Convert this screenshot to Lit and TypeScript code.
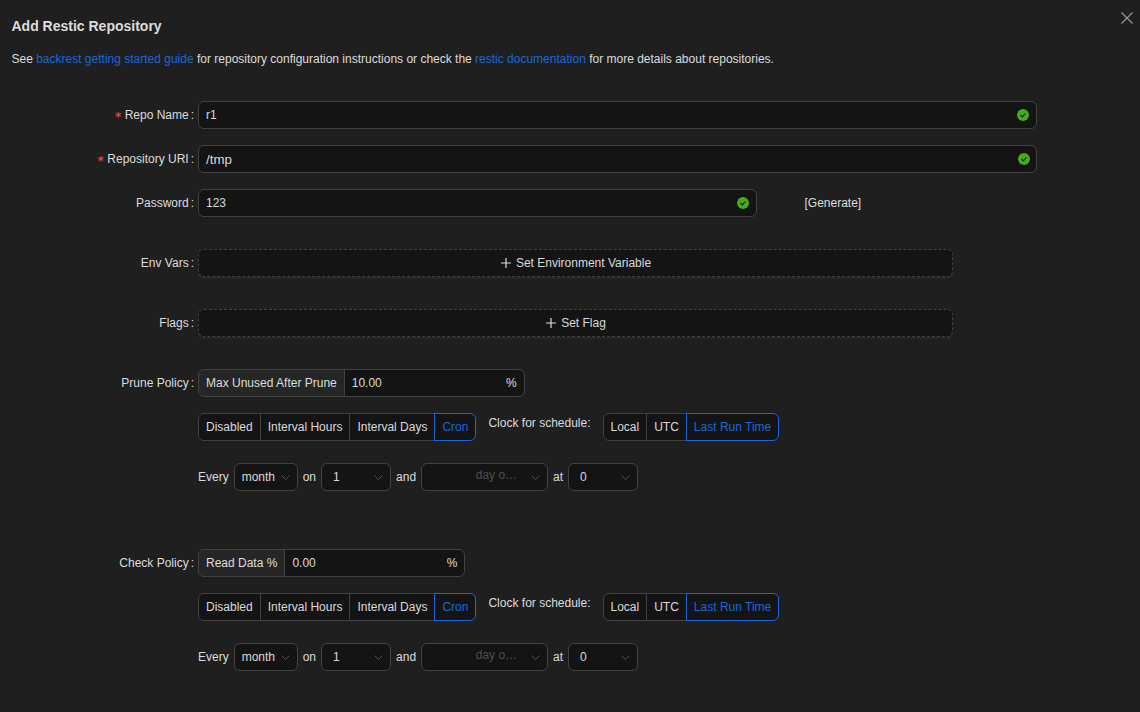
import { LitElement, html, css, svg } from "lit";
import { customElement } from "lit/decorators.js";

const check = html`<svg class="ok" viewBox="0 0 12 12"><circle cx="6" cy="6" r="6" fill="#49aa19"/><path d="M3.6 6.2 5.3 7.9 8.4 4.5" fill="none" stroke="#141414" stroke-width="1.1"/></svg>`;
const chev = svg`<path d="M.5.5 4.5 4.5 8.5.5" fill="none" stroke="currentColor" stroke-width="1"/>`;
const chevron = html`<svg class="chev" viewBox="0 0 9 5">${chev}</svg>`;
const plus = html`<svg class="plus" viewBox="0 0 10 10"><path d="M5 0V10M0 5H10" stroke="currentColor" stroke-width="1.2" fill="none"/></svg>`;

@customElement("app-root")
export class AppRoot extends LitElement {
  static styles = css`
    :host { display: block; width: 1140px; height: 712px; overflow: hidden; background: #1f1f1f; color: rgba(255,255,255,.85); font: 12px/20px "Liberation Sans", Arial, sans-serif; box-sizing: border-box; position: relative; }
    * { box-sizing: border-box; }
    .close { position: absolute; top: 12px; right: 7px; width: 12px; height: 12px; color: rgba(255,255,255,.55); display: block; }
    h1 { margin: 0; padding: 16px 0 0 11.5px; font-size: 14px; line-height: 20px; font-weight: 700; color: rgba(255,255,255,.85); }
    p { margin: 0; padding: 13px 0 0 11.5px; line-height: 20px; color: rgba(255,255,255,.85); }
    a { color: #1668dc; text-decoration: none; }
    form { display: block; padding-top: 32px; }
    .row { display: grid; grid-template-columns: 198px 1fr; height: 28px; margin-bottom: 16px; align-items: center; }
    .row.g2 { margin-bottom: 32px; }
    .row.g3 { margin-bottom: 22px; }
    .row.g4 { margin-bottom: 58px; }
    label { display: flex; justify-content: flex-end; align-items: center; padding-right: 0; color: rgba(255,255,255,.85); white-space: nowrap; }
    label .req { color: #dc4446; font-family: "DejaVu Sans", sans-serif; font-size: 12px; margin: 3px 4px 0 0; line-height: 1; font-weight: 700; letter-spacing: -.6px; }
    label .c { margin: 0 4px 0 2px; }
    .input { display: flex; align-items: center; height: 28px; border: 1px solid #424242; border-radius: 6px; background: #141414; padding: 0 7px; color: rgba(255,255,255,.85); }
    .input .v { flex: 1; }
    .w839 { width: 839px; }
    .w839b { width: 839px; padding-right: 6px; }
    .w559 { width: 559px; }
    .big { font-size: 13.33px; padding-top: 1px; }
    .ok { width: 12px; height: 12px; display: block; }
    .pw { display: flex; align-items: center; }
    .gen { margin-left: 47.5px; }
    .dash { width: 755px; height: 28px; border: 1px dashed #424242; border-radius: 6px; background: #141414; display: flex; align-items: center; justify-content: center; gap: 5px; padding-left: 1px; box-shadow: 0 2px 0 rgba(255,255,255,.04); }
    .plus { width: 10px; height: 10px; display: block; }
    .group { display: inline-flex; height: 28px; border: 1px solid #424242; border-radius: 6px; background: #141414; overflow: hidden; }
    .addon { display: flex; align-items: center; padding: 0 7px; background: rgba(255,255,255,.08); border-right: 1px solid #424242; white-space: nowrap; }
    .num { display: flex; align-items: center; justify-content: space-between; padding: 0 7px; }
    .cols { display: flex; align-items: flex-start; }
    .seg { display: inline-flex; height: 28px; background: #141414; border-radius: 6px; flex: none; }
    .seg span { display: flex; align-items: center; padding: 0 7px; border: 1px solid #424242; margin-left: -1px; position: relative; white-space: nowrap; }
    .seg span:first-child { margin-left: 0; border-radius: 6px 0 0 6px; }
    .seg span:last-child { border-radius: 0 6px 6px 0; }
    .seg span.on { color: #1668dc; border-color: #1668dc; z-index: 1; }
    .clk { margin: 0 12px 0 12px; white-space: nowrap; line-height: 20px; }
    .cron { display: flex; align-items: center; gap: 5px; }
    .sel { position: relative; height: 28px; border: 1px solid #424242; border-radius: 6px; background: #141414; display: flex; align-items: center; padding: 0 7px; flex: none; }
    .chev { position: absolute; right: 7px; top: 10.5px; width: 9px; height: 5px; color: rgba(255,255,255,.25); display: block; }
    .sel.s1 { width: 64px; }
    .sel.s2 { width: 70px; padding-left: 11px; }
    .sel.s3 { width: 127px; justify-content: flex-end; padding-right: 30px; color: rgba(255,255,255,.25); padding-bottom: 4px; }
  `;

  private policy(label: string, addon: string, val: string, w: number, last: boolean) {
    return html`
      <div class="row"><label>${label}<span class="c">:</span></label>
        <div><div class="group"><span class="addon">${addon}</span><span class="num" style="width:${w}px"><span>${val}</span><span>%</span></span></div></div></div>
      <div class="row g3"><span></span><div class="cols">
        <div class="seg"><span>Disabled</span><span>Interval Hours</span><span>Interval Days</span><span class="on">Cron</span></div>
        <div class="clk">Clock for schedule:</div>
        <div class="seg"><span>Local</span><span>UTC</span><span class="on">Last Run Time</span></div>
      </div></div>
      <div class="row ${last ? "" : "g4"}"><span></span><div class="cron">
        Every <div class="sel s1">month${chevron}</div> on <div class="sel s2">1${chevron}</div> and
        <div class="sel s3">day o…${chevron}</div> at <div class="sel s2">0${chevron}</div>
      </div></div>`;
  }

  render() {
    return html`
      <svg class="close" viewBox="0 0 12 12"><path d="M.5.5 11.5 11.5M11.5.5.5 11.5" stroke="currentColor" stroke-width="1.1" fill="none"/></svg>
      <h1>Add Restic Repository</h1>
      <p>See <a>backrest getting started guide</a> for repository configuration instructions or check the <a>restic documentation</a> for more details about repositories.</p>
      <form>
        <div class="row"><label><span class="req">*</span>Repo Name<span class="c">:</span></label><div class="input w839"><span class="v">r1</span>${check}</div></div>
        <div class="row"><label><span class="req">*</span>Repository URI<span class="c">:</span></label><div class="input w839b"><span class="v big">/tmp</span>${check}</div></div>
        <div class="row g2"><label>Password<span class="c">:</span></label><div class="pw"><div class="input w559"><span class="v">123</span>${check}</div><span class="gen">[Generate]</span></div></div>
        <div class="row g2"><label>Env Vars<span class="c">:</span></label><div class="dash">${plus}Set Environment Variable</div></div>
        <div class="row g2"><label>Flags<span class="c">:</span></label><div class="dash">${plus}Set Flag</div></div>
        ${this.policy("Prune Policy", "Max Unused After Prune", "10.00", 179, false)}
        ${this.policy("Check Policy", "Read Data %", "0.00", 179, true)}
      </form>`;
  }
}
